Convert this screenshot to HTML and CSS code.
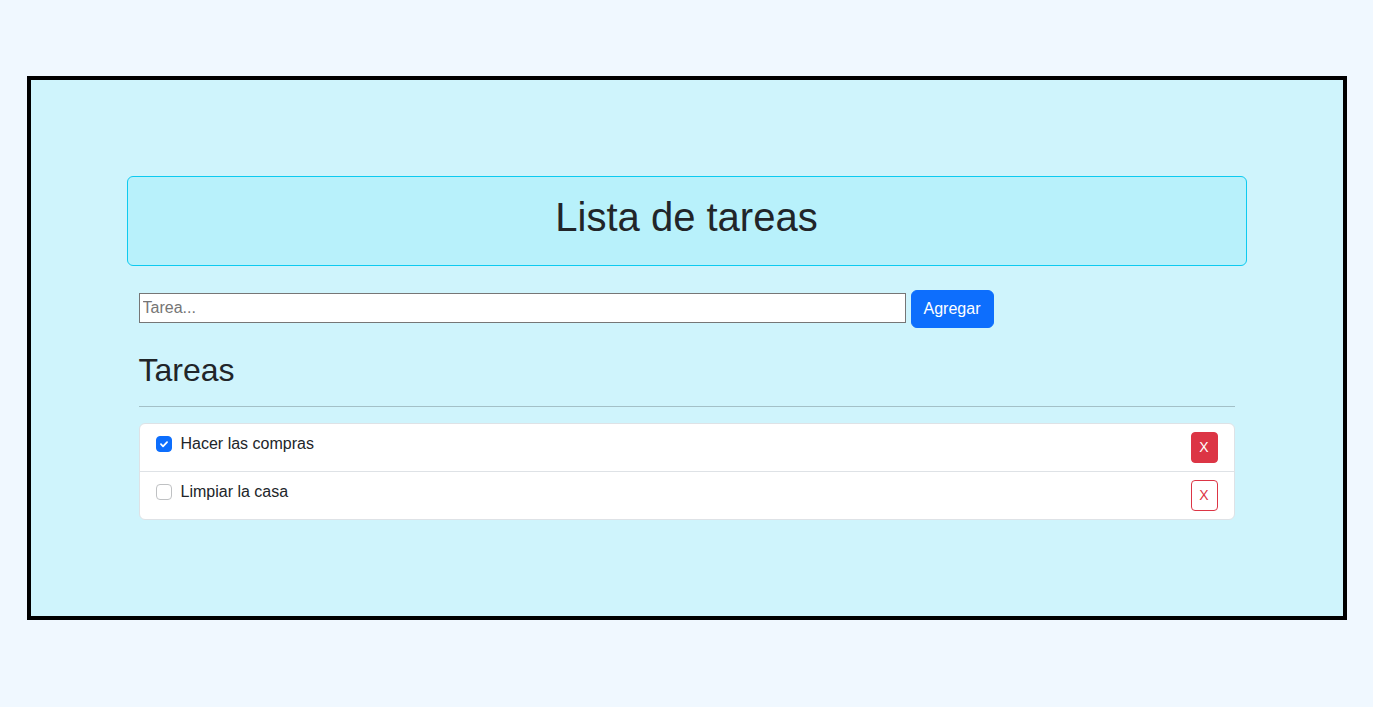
FILE: index.html
```html
<!DOCTYPE html>
<html lang="es">
<head>
<meta charset="utf-8">
<title>Lista de tareas</title>
<link rel="stylesheet" href="styles.css">
</head>
<body>
<main class="frame">
  <header class="title-card">
    <h1 class="title">Lista de tareas</h1>
  </header>
  <section class="content">
    <form class="add-form">
      <input class="task-input" type="text" placeholder="Tarea...">
      <button class="btn-add" type="button">Agregar</button>
    </form>
    <h2 class="subtitle">Tareas</h2>
    <hr class="divider">
    <ul class="task-list">
      <li class="task-item">
        <label class="task-label">
          <span class="check checked">
            <svg viewBox="0 0 16 16" width="16" height="16"><path d="M4.5 8.2l2.4 2.4 4.6-4.8" fill="none" stroke="#fff" stroke-width="2" stroke-linecap="round" stroke-linejoin="round"/></svg>
          </span>
          <span class="task-text">Hacer las compras</span>
        </label>
        <button class="btn-del solid" type="button">X</button>
      </li>
      <li class="task-item">
        <label class="task-label">
          <span class="check"></span>
          <span class="task-text">Limpiar la casa</span>
        </label>
        <button class="btn-del outline" type="button">X</button>
      </li>
    </ul>
  </section>
</main>
</body>
</html>
```

FILE: styles.css
```css
* { box-sizing: border-box; }

html, body {
  margin: 0;
  padding: 0;
}

body {
  background: #f0f8ff;
  font-family: "Liberation Sans", Arial, sans-serif;
  color: #212529;
  font-size: 16px;
  line-height: 1.5;
}

.frame {
  width: 1320px;
  margin: 76px auto 0;
  border: 4px solid #000;
  background: #cff4fc;
  padding: 96px 96px 96px;
  min-height: 544px;
}

.title-card {
  background: #b8f1fb;
  border: 1px solid #0dcaf0;
  border-radius: 6px;
  padding: 16px 16px 24px;
}

.title {
  margin: 0;
  font-size: 40px;
  font-weight: 400;
  line-height: 1.2;
  text-align: center;
}

.content {
  padding: 24px 12px 0;
}

.add-form {
  display: flex;
  align-items: center;
  gap: 5px;
  margin: 0;
}

.task-input {
  width: 767px;
  height: 30px;
  margin-bottom: 2px;
  border: 1px solid #767676;
  border-radius: 0;
  padding: 0 3px;
  font-family: "Liberation Sans", Arial, sans-serif;
  font-size: 16px;
  background: #fff;
  color: #212529;
}

.task-input::placeholder {
  color: #757575;
}

.btn-add {
  width: 83px;
  height: 38px;
  padding: 6px 0;
  text-align: center;
  border: 1px solid #0d6efd;
  border-radius: 6px;
  background: #0d6efd;
  color: #fff;
  font-family: "Liberation Sans", Arial, sans-serif;
  font-size: 16px;
  line-height: 1.5;
}

.subtitle {
  margin: 23px 0 0;
  font-size: 32px;
  font-weight: 400;
  line-height: 1.2;
}

.divider {
  margin: 17px 0 16px;
  border: 0;
  border-top: 1px solid #212529;
  opacity: 0.25;
}

.task-list {
  list-style: none;
  margin: 0;
  padding: 0;
  background: #fff;
  border: 1px solid #dee2e6;
  border-radius: 6px;
}

.task-item {
  display: flex;
  justify-content: space-between;
  align-items: flex-start;
  padding: 8px 16px;
  height: 48px;
}

.task-item + .task-item {
  border-top: 1px solid #dee2e6;
}

.task-item:first-child {
  height: 47px;
}

.task-label {
  display: flex;
  align-items: center;
  gap: 9px;
  line-height: 24px;
}

.check {
  width: 16px;
  height: 16px;
  border: 1px solid #bfc1c3;
  border-radius: 4px;
  background: #fff;
  display: flex;
  align-items: center;
  justify-content: center;
}

.check.checked {
  background: #0d6efd;
  border-color: #0d6efd;
}

.check svg {
  display: block;
}

.btn-del {
  width: 27px;
  height: 31px;
  padding: 4px 0;
  text-align: center;
  border-radius: 4px;
  font-family: "Liberation Sans", Arial, sans-serif;
  font-size: 14px;
  line-height: 1.5;
  border: 1px solid #dc3545;
}

.btn-del.solid {
  background: #dc3545;
  color: #fff;
}

.btn-del.outline {
  background: transparent;
  color: #dc3545;
}
```
